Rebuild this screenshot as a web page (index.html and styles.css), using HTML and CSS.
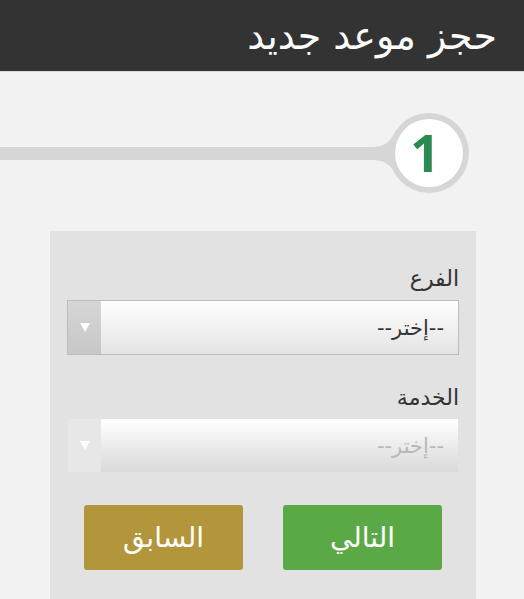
FILE: index.html
```html
<!DOCTYPE html>
<html lang="ar" dir="rtl">
<head>
<meta charset="UTF-8">
<meta name="viewport" content="width=device-width, initial-scale=1.0">
<title>حجز موعد جديد</title>
<link rel="stylesheet" href="styles.css">
</head>

<body>
    <header class="top-bar">
        <h1>حجز موعد جديد</h1>
    </header>

    <div class="steps">
        <svg class="steps-track" width="524" height="90" viewBox="0 0 524 90">
            <path d="M0 34 L374 34 Q386 34 393 23 L393 57 Q386 47 374 47 L0 47 Z" fill="#d6d6d6" />
            <circle cx="429" cy="40" r="40" fill="#d6d6d6" />
            <circle cx="429" cy="40" r="34" fill="#ffffff" />
            <text x="425" y="59" class="step-number" text-anchor="middle">1</text>
        </svg>
    </div>

    <div class="panel">
        <div class="field">
            <label class="field-label">الفرع</label>
            <div class="select">
                <span class="select-value">--إختر--</span>
                <span class="select-arrow"></span>
            </div>
        </div>

        <div class="field">
            <label class="field-label">الخدمة</label>
            <div class="select select-disabled">
                <span class="select-value">--إختر--</span>
                <span class="select-arrow"></span>
            </div>
        </div>

        <div class="actions">
            <button class="btn btn-next">التالي</button>
            <button class="btn btn-prev">السابق</button>
        </div>
    </div>
</body>

</html>
```

FILE: styles.css
```css
body {
    margin: 0;
    background-color: #f2f2f2;
    font-family: "DejaVu Sans", "Noto Sans", sans-serif;
    color: #333;
}

.top-bar {
    background-color: #333333;
    height: 71px;
    border-bottom: 1px solid #d9d9d9;
    padding: 0 27px;
    display: flex;
    align-items: center;
}

.top-bar h1 {
    margin: 0;
    color: #fff;
    font-weight: normal;
    font-size: 38px;
}

.steps {
    padding-top: 41px;
    height: 118px;
}

.steps-track {
    display: block;
}

.step-number {
    font-family: "Open Sans", sans-serif;
    font-weight: bold;
    font-size: 52px;
    fill: #2a8a4f;
}

.panel {
    margin: 0 48px 0 50px;
    background-color: #e2e2e2;
    padding: 33px 17px 30px;
}

.field {
    margin-bottom: 28px;
}

.field-label {
    display: block;
    font-size: 22px;
    color: #333;
    line-height: 29px;
    margin-bottom: 7px;
}

.select {
    height: 53px;
    border: 1px solid #bcbcbc;
    background: linear-gradient(#ffffff, #e3e3e3);
    display: flex;
    align-items: center;
}

.select-value {
    flex: 1;
    padding: 0 14px;
    font-size: 21px;
    color: #333;
}

.select-arrow {
    width: 33px;
    height: 100%;
    background: linear-gradient(#d6d6d6, #c7c7c7);
    display: flex;
    align-items: center;
    justify-content: center;
}

.select-arrow::after {
    content: "";
    border-left: 5px solid transparent;
    border-right: 5px solid transparent;
    border-top: 9px solid #fff;
}

.select-disabled {
    border: none;
    margin: 0 1px;
    height: 53px;
    background: linear-gradient(#ffffff, #d9d9d9);
}

.select-disabled .select-value {
    color: #b8b8b8;
}

.select-disabled .select-arrow {
    background: #e7e7e7;
}

.actions {
    display: flex;
    justify-content: center;
    gap: 40px;
    padding-top: 5px;
}

.btn {
    width: 159px;
    height: 65px;
    border: none;
    border-radius: 3px;
    color: #fff;
    font-family: "DejaVu Sans", "Noto Sans", sans-serif;
    font-size: 28px;
    cursor: pointer;
}

.btn-next {
    background-color: #5aa946;
}

.btn-prev {
    background-color: #b3963b;
}
```
